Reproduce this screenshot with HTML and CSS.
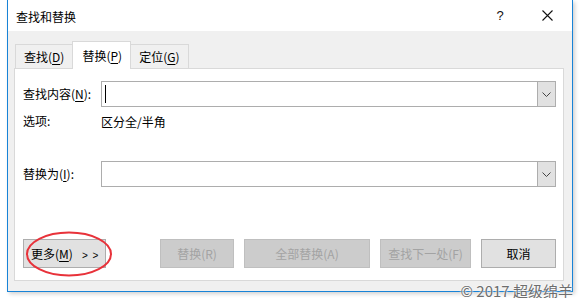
FILE: index.html
```html
<!DOCTYPE html>
<html lang="zh-CN">
<head>
<meta charset="utf-8">
<title>查找和替换</title>
<link rel="stylesheet" href="styles.css">
</head>
<body>
<div class="window">
  <div class="titlebar">
    <span class="title">查找和替换</span>
    <span class="help">?</span>
    <span class="close"><svg width="11" height="11" viewBox="0 0 11 11"><path d="M0.5 0.5 L10.5 10.5 M10.5 0.5 L0.5 10.5" stroke="#111" stroke-width="1.1" fill="none"/></svg></span>
  </div>
  <div class="body">
    <div class="tabs">
      <div class="tab">查找(<u>D</u>)</div>
      <div class="tab active">替换(<u>P</u>)</div>
      <div class="tab">定位(<u>G</u>)</div>
    </div>
    <div class="panel">
      <div class="row row-find">
        <span class="label">查找内容(<u>N</u>):</span>
        <div class="combo"><span class="caret"></span><span class="drop"><svg width="9" height="5" viewBox="0 0 9 5"><path d="M0.5 0.5 L4.5 4.5 L8.5 0.5" stroke="#444" stroke-width="1" fill="none"/></svg></span></div>
      </div>
      <div class="row row-opt">
        <span class="label">选项:</span>
        <span class="value">区分全/半角</span>
      </div>
      <div class="row row-repl">
        <span class="label">替换为(<u>I</u>):</span>
        <div class="combo"><span class="drop"><svg width="9" height="5" viewBox="0 0 9 5"><path d="M0.5 0.5 L4.5 4.5 L8.5 0.5" stroke="#444" stroke-width="1" fill="none"/></svg></span></div>
      </div>
      <div class="buttons">
        <button class="btn more">更多(<u>M</u>)<span class="arrows">&gt; &gt;</span></button>
        <span class="spacer"></span>
        <button class="btn disabled b-repl">替换(R)</button>
        <button class="btn disabled b-all">全部替换(A)</button>
        <button class="btn disabled b-next">查找下一处(F)</button>
        <button class="btn b-cancel">取消</button>
      </div>
      <svg class="ellipse" width="90" height="48" viewBox="0 0 90 48"><ellipse cx="45" cy="24" rx="42" ry="21.5" stroke="#e8323a" stroke-width="2" fill="none"/></svg>
    </div>
  </div>
</div>
<div class="below">关键字（K）</div>
<div class="watermark">© 2017 超级绵羊</div>
</body>
</html>
```

FILE: styles.css
```css
html, body {
  margin: 0;
  padding: 0;
  background: #ffffff;
  overflow: hidden;
  width: 579px;
  height: 298px;
  font-family: "Noto Sans CJK SC", "Microsoft YaHei", sans-serif;
  font-size: 12px;
  color: #000;
}
body { position: relative; }

.window {
  margin-left: 7px;
  width: 564px;
  border: 1px solid #1883d7;
  border-top: none;
  box-shadow: 2px 2px 4px rgba(0,0,0,0.18);
  background: #f0f0f0;
}

.titlebar {
  height: 31px;
  background: #fff;
  display: flex;
  align-items: center;
}
.title {
  margin-left: 8px;
  flex: 1;
  line-height: 16px;
  position: relative;
  top: 1px;
}
.help {
  width: 14px;
  text-align: center;
  font-family: "Liberation Sans", sans-serif;
  font-size: 13px;
  margin-right: 35px;
  color: #111;
}
.close {
  width: 11px;
  height: 11px;
  margin-right: 19px;
  display: flex;
}

.body {
  padding: 10px 8px 10px 6px;
}

.tabs {
  display: flex;
  align-items: flex-end;
  height: 27px;
  padding-left: 1px;
  position: relative;
  z-index: 1;
}
.tab {
  height: 24px;
  box-sizing: border-box;
  border: 1px solid #d9d9d9;
  border-bottom: none;
  background: #f0f0f0;
  padding: 0 8px 0 8px;
  display: flex;
  align-items: center;
  line-height: 14px;
}
.tab + .tab { margin-left: -1px; }
.tab.active {
  height: 28px;
  margin-bottom: -1px;
  background: #fff;
  padding: 0 8px 0 9px;
}
.tab u { text-underline-offset: 2px; }

.panel {
  position: relative;
  height: 211px;
  border: 1px solid #d9d9d9;
  background: #fff;
  box-sizing: content-box;
  padding: 0 7px 0 8px;
  display: flex;
  flex-direction: column;
}

.row {
  display: flex;
  align-items: center;
}
.label {
  width: 78px;
  flex: none;
  line-height: 16px;
}
.label u, .btn u { text-underline-offset: 2px; }
.row-find { margin-top: 12px; }
.row-opt { margin-top: 6px; height: 16px; }
.row-repl { margin-top: 32px; }

.combo {
  flex: 1;
  height: 26px;
  box-sizing: border-box;
  border: 1px solid #adadad;
  display: flex;
  align-items: center;
  background: #fff;
}
.caret {
  width: 1px;
  height: 18px;
  background: #000;
  margin-left: 3px;
}
.drop {
  margin-left: auto;
  width: 18px;
  height: 24px;
  box-sizing: border-box;
  border-left: 1px solid #adadad;
  background: #e1e1e1;
  display: flex;
  align-items: center;
  justify-content: center;
}

.buttons {
  display: flex;
  margin-top: auto;
  margin-bottom: 12px;
  gap: 10px;
}
.spacer { flex: 1; }
.btn {
  height: 29px;
  box-sizing: border-box;
  border: 1px solid #adadad;
  background: #e1e1e1;
  font-family: inherit;
  font-size: 12px;
  color: #000;
  padding: 0;
  margin: 0;
}
.btn.disabled {
  background: #cccccc;
  border-color: #bfbfbf;
  color: #a3a3a3;
}
.more {
  width: 83px;
  text-align: left;
  padding-left: 7px;
}
.arrows {
  font-family: "Liberation Sans", sans-serif;
  font-size: 10px;
  margin-left: 9px;
  letter-spacing: 1px;
}
.b-repl { width: 74px; }
.b-all { width: 126px; }
.b-next { width: 91px; }
.b-cancel { width: 75px; }

.ellipse {
  position: absolute;
  left: 9px;
  top: 161px;
}

.below {
  margin-left: 112px;
  margin-top: 4px;
  font-size: 14px;
  color: #222;
  line-height: 16px;
}

.watermark {
  position: absolute;
  right: 6px;
  bottom: -2px;
  font-size: 15px;
  color: #6e6e6e;
  text-shadow: 0 0 2px #fff, 0 0 2px #fff;
  line-height: 18px;
}
```
